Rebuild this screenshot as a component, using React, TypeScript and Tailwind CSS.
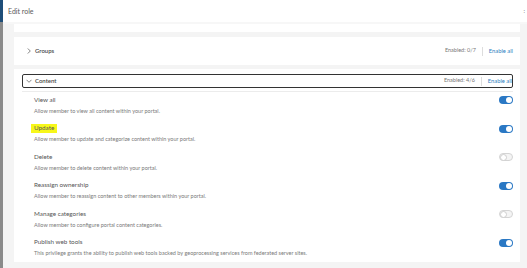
import React from "react";

const rows = [
  { title: "View all", desc: "Allow member to view all content within your portal.", on: true },
  { title: "Update", desc: "Allow member to update and categorize content within your portal.", on: true, hl: true },
  { title: "Delete", desc: "Allow member to delete content within your portal.", on: false },
  { title: "Reassign ownership", desc: "Allow member to reassign content to other members within your portal.", on: true },
  { title: "Manage categories", desc: "Allow member to configure portal content categories.", on: false },
  { title: "Publish web tools", desc: "This privilege grants the ability to publish web tools backed by geoprocessing services from federated server sites.", on: true },
];

function Toggle({ on }: { on: boolean }) {
  return on ? (
    <div className="w-[14px] h-[8px] rounded-full bg-[#2a78c4] flex items-center justify-end pr-[1px]">
      <div className="w-[6px] h-[6px] rounded-full bg-white" />
    </div>
  ) : (
    <div className="w-[14px] h-[8px] rounded-full bg-[#f4f4f4] border border-[#d4d4d4] flex items-center">
      <div className="w-[7px] h-[7px] rounded-full bg-white border border-[#cfcfcf]" />
    </div>
  );
}

function Chevron({ down }: { down?: boolean }) {
  return (
    <svg width="6" height="6" viewBox="0 0 6 6" className="shrink-0">
      {down ? (
        <path d="M0.5 1.8 L3 4.3 L5.5 1.8" fill="none" stroke="#666" strokeWidth="0.8" />
      ) : (
        <path d="M1.8 0.5 L4.3 3 L1.8 5.5" fill="none" stroke="#666" strokeWidth="0.8" />
      )}
    </svg>
  );
}

export default function App() {
  return (
    <div
      className="w-[527px] h-[268px] overflow-hidden flex bg-[#f4f4f4]"
      style={{ fontFamily: "Lato, 'Open Sans', sans-serif" }}
    >
      <div className="w-[3px] flex flex-col shrink-0">
        <div className="h-[22px] bg-[#1f4e79]" />
        <div className="flex-1 bg-[#8a8a8a]" />
      </div>
      <div className="flex-1 flex flex-col">
        <div className="h-[22px] bg-white flex items-center justify-between pl-[5px] pr-[2px]">
          <span className="text-[7px] text-[#5a5a5a] leading-none">Edit role</span>
          <span className="text-[6px] text-[#666] leading-none">:</span>
        </div>
        <div className="h-[2px] bg-[#f7f7f7]" />
        <div className="flex-1 flex flex-col pl-[11px] pr-[7px]">
          <div className="h-[8px] bg-white" />
          <div className="mt-[5px] h-[28px] bg-white flex items-center justify-between pl-[12px] pr-[7px]">
            <div className="flex items-center gap-[3px]">
              <Chevron />
              <span className="text-[6px] font-semibold text-[#4a4a4a] leading-none">Groups</span>
            </div>
            <div className="flex items-center">
              <span className="text-[5.5px] text-[#777] leading-none">Enabled: 0/7</span>
              <div className="w-px h-[9px] bg-[#ddd] mx-[6px]" />
              <span className="text-[5.8px] text-[#2f7fc1] leading-none">Enable all</span>
            </div>
          </div>
          <div className="mt-[4px] h-[193px] bg-white flex flex-col pt-[5px] pr-[7px] pl-[8px]">
            <div className="h-[14px] shrink-0 border border-[#333] rounded-[2px] flex items-center justify-between pl-[3px] overflow-hidden">
              <div className="flex items-center gap-[3px]">
                <Chevron down />
                <span className="text-[6px] font-semibold text-[#4a4a4a] leading-none">Content</span>
              </div>
              <div className="flex items-center">
                <span className="text-[5.5px] text-[#777] leading-none">Enabled: 4/6</span>
                <div className="w-px h-[9px] bg-[#ddd] mx-[6px]" />
                <span className="text-[5.8px] text-[#2f7fc1] leading-none whitespace-nowrap">Enable all</span>
              </div>
            </div>
            <div className="mt-[3px] h-px shrink-0 bg-[#ececec]" />
            <div className="flex flex-col pt-[3px]">
              {rows.map((r) => (
                <div key={r.title} className="h-[28.5px] shrink-0 flex justify-between pl-[12px]">
                  <div className="flex flex-col">
                    <div className="h-[10px] flex items-center">
                      <span
                        className={
                          "text-[6.3px] text-[#555] leading-none " +
                          (r.hl ? "bg-[#f7f71a] px-[3px] -mx-[3px] py-[1px]" : "")
                        }
                      >
                        {r.title}
                      </span>
                    </div>
                    <div className="h-[13px] flex items-center">
                      <span className="text-[5.5px] text-[#7a7a7a] leading-none whitespace-nowrap">{r.desc}</span>
                    </div>
                  </div>
                  <div className="h-[10px] flex items-center">
                    <Toggle on={r.on} />
                  </div>
                </div>
              ))}
            </div>
          </div>
        </div>
      </div>
    </div>
  );
}
